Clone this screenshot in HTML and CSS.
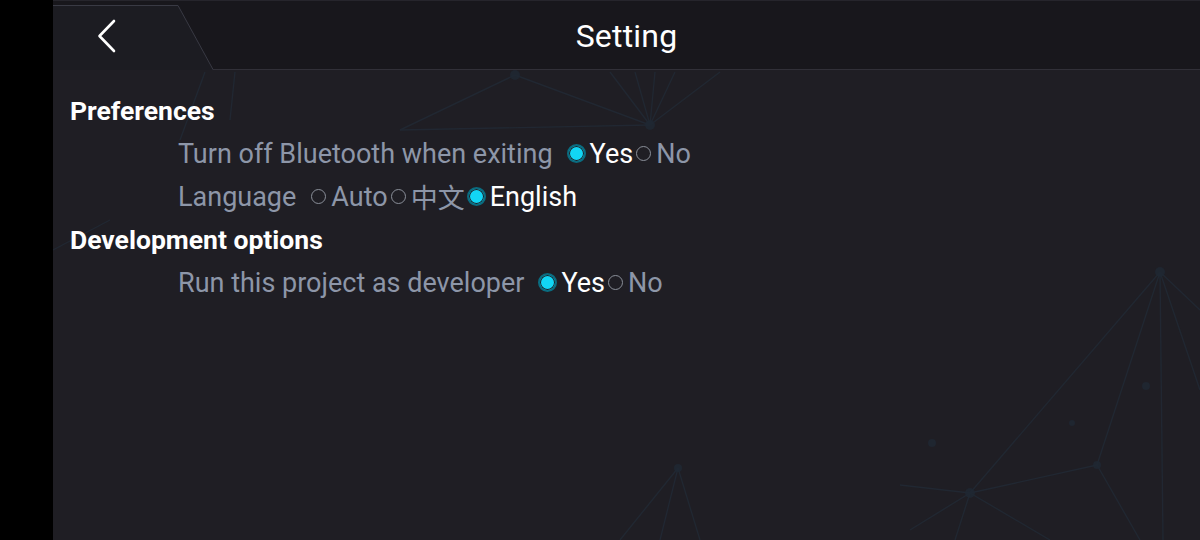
FILE: index.html
```html
<!DOCTYPE html>
<html lang="en">
<head>
<meta charset="utf-8">
<title>Setting</title>
<link rel="stylesheet" href="styles.css">
</head>
<body>
<div class="app">
  <svg class="bg-net" width="1147" height="540" viewBox="53 0 1147 540" aria-hidden="true">
    <g stroke="#222c38" stroke-width="1.4" fill="none" opacity="0.7">
      <line x1="1160" y1="272" x2="970" y2="493"/>
      <line x1="1160" y1="272" x2="1097" y2="465"/>
      <line x1="1160" y1="272" x2="1163" y2="540"/>
      <line x1="1160" y1="272" x2="1200" y2="310"/>
      <line x1="1160" y1="272" x2="1200" y2="390"/>
      <line x1="1097" y1="465" x2="970" y2="493"/>
      <line x1="1097" y1="465" x2="1140" y2="540"/>
      <line x1="970" y1="493" x2="900" y2="485"/>
      <line x1="970" y1="493" x2="910" y2="530"/>
      <line x1="970" y1="493" x2="955" y2="540"/>
      <line x1="970" y1="493" x2="1050" y2="540"/>
      <line x1="678" y1="468" x2="660" y2="540"/>
      <line x1="678" y1="468" x2="700" y2="540"/>
      <line x1="678" y1="468" x2="620" y2="540"/>
      <line x1="515" y1="75" x2="400" y2="130"/>
      <line x1="515" y1="75" x2="650" y2="125"/>
      <line x1="650" y1="125" x2="610" y2="72"/>
      <line x1="650" y1="125" x2="635" y2="72"/>
      <line x1="650" y1="125" x2="655" y2="72"/>
      <line x1="650" y1="125" x2="675" y2="72"/>
      <line x1="650" y1="125" x2="720" y2="72"/>
      <line x1="650" y1="125" x2="400" y2="130"/>
      <line x1="205" y1="72" x2="180" y2="140"/>
      <line x1="235" y1="72" x2="230" y2="120"/>
      <line x1="53" y1="250" x2="110" y2="220"/>
    </g>
    <g fill="#1f2833" opacity="0.8">
      <circle cx="1160" cy="272" r="5"/>
      <circle cx="970" cy="493" r="5"/>
      <circle cx="1097" cy="465" r="4"/>
      <circle cx="678" cy="468" r="4"/>
      <circle cx="515" cy="75" r="5"/>
      <circle cx="650" cy="125" r="5"/>
      <circle cx="1146" cy="386" r="4"/>
      <circle cx="932" cy="443" r="4"/>
      <circle cx="1072" cy="423" r="3"/>
    </g>
  </svg>

  <header class="topbar">
    <button class="back" type="button" aria-label="Back">
      <svg class="tab" width="161" height="70" viewBox="0 0 161 70" aria-hidden="true">
        <path d="M0 5.5 H125 L160 70 H0 Z" fill="#1c1c22"/>
        <path d="M0 5.5 H125 L160 69.5" fill="none" stroke="#393a44" stroke-width="1"/>
      </svg>
      <svg class="chev" width="24" height="36" viewBox="0 0 24 36" aria-hidden="true">
        <path d="M18 3 L3.5 18 L18 33" fill="none" stroke="#ffffff" stroke-width="2.6" stroke-linecap="round" stroke-linejoin="round"/>
      </svg>
    </button>
    <h1 class="title">Setting</h1>
    <div class="spacer"></div>
  </header>

  <main class="content">
    <h2 class="section">Preferences</h2>
    <div class="row">
      <span class="label">Turn off Bluetooth when exiting</span>
      <span class="options">
        <span class="opt on"><i class="radio"></i>Yes</span>
        <span class="opt"><i class="radio"></i>No</span>
      </span>
    </div>
    <div class="row">
      <span class="label">Language</span>
      <span class="options">
        <span class="opt"><i class="radio"></i>Auto</span>
        <span class="opt"><i class="radio"></i>中文</span>
        <span class="opt on"><i class="radio"></i>English</span>
      </span>
    </div>
    <h2 class="section">Development options</h2>
    <div class="row">
      <span class="label">Run this project as developer</span>
      <span class="options">
        <span class="opt on"><i class="radio"></i>Yes</span>
        <span class="opt"><i class="radio"></i>No</span>
      </span>
    </div>
  </main>
</div>
</body>
</html>
```

FILE: styles.css
```css
html, body {
  margin: 0;
  padding: 0;
  background: #000;
  width: 1200px;
  height: 540px;
  overflow: hidden;
}

body {
  font-family: Roboto, "Noto Sans", "Noto Sans CJK SC", sans-serif;
}

.app {
  position: relative;
  margin-left: 53px;
  width: 1147px;
  height: 540px;
  background: #1f1e24;
  overflow: hidden;
}

.bg-net {
  position: absolute;
  left: 0;
  top: 0;
  pointer-events: none;
}

.topbar {
  position: relative;
  display: grid;
  grid-template-columns: 161px 1fr 161px;
  height: 70px;
  box-sizing: border-box;
  background: #18171c;
  border-top: 1px solid #26252c;
  border-bottom: 1px solid #313038;
}

.back {
  position: relative;
  display: flex;
  align-items: center;
  padding: 0 0 0 43px;
  margin: -1px 0 0 0;
  height: 70px;
  border: 0;
  background: transparent;
  cursor: pointer;
}

.back .tab {
  position: absolute;
  left: 0;
  top: 0;
}

.back .chev {
  position: relative;
  margin-top: 2px;
}

.title {
  margin: 0;
  align-self: center;
  text-align: center;
  color: #ffffff;
  font-weight: 400;
  font-size: 32px;
  line-height: 70px;
  letter-spacing: 0.2px;
}

.content {
  position: relative;
  padding: 19px 0 0 17px;
}

.section {
  margin: 0;
  font-size: 26.5px;
  font-weight: 700;
  line-height: 43px;
  color: #ffffff;
}

.row {
  display: flex;
  align-items: center;
  height: 43px;
  padding-left: 108px;
  font-size: 27px;
  color: #8d96a8;
}

.label {
  margin-right: 12px;
}

.options {
  display: flex;
  align-items: center;
}

.opt {
  display: inline-flex;
  align-items: center;
  color: #8d96a8;
  font-family: Roboto, "Noto Sans CJK SC", sans-serif;
}

.opt.on {
  color: #ffffff;
}

.radio {
  display: inline-block;
  box-sizing: border-box;
  width: 15px;
  height: 15px;
  margin: 0 5px 0 3px;
  border: 1px solid #8a8f99;
  border-radius: 50%;
}

.opt.on .radio {
  width: 19px;
  height: 19px;
  margin: 0 4px 0 2px;
  border: 2px solid #0a6c80;
  background: #12d6f5;
  box-shadow: inset 0 0 0 1px #1f1e24;
}
```
